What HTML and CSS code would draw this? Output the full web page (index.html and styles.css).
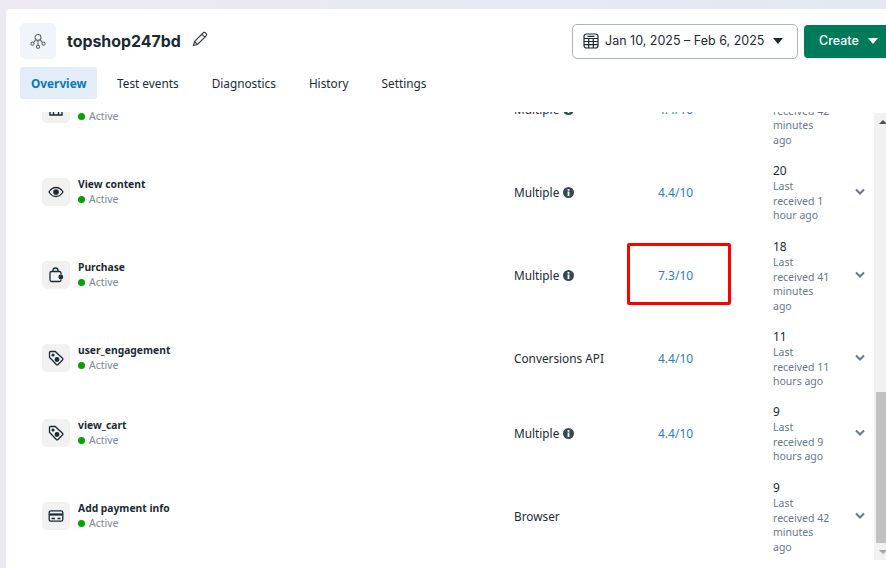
FILE: index.html
```html
<!DOCTYPE html>
<html lang="en">
<head>
<meta charset="utf-8">
<title>topshop247bd</title>
<link rel="stylesheet" href="styles.css">
</head>
<body>
<div class="card">
  <header class="head">
    <div class="title-row">
      <div class="brand">
        <span class="logo"><svg width="16" height="16" viewBox="0 0 18 18" fill="none" stroke="#5a6672" stroke-width="1.200"><circle cx="9" cy="5" r="3.300"/><circle cx="2.800" cy="12" r="1.800"/><circle cx="9" cy="15.500" r="1.800"/><circle cx="15.200" cy="12" r="1.800"/><path d="M9 8.300v5.400M6.800 7.500 4 10.600M11.200 7.500 14 10.600"/></svg></span>
        <h1 class="name">topshop247bd</h1>
        <svg class="pencil" width="16" height="16" viewBox="0 0 16 16" fill="none" stroke="#3c4650" stroke-width="1.200"><path d="M1.500 14.500 2.500 10.500 11 2a1.800 1.800 0 0 1 2.800.2 1.800 1.800 0 0 1 .2 2.800L5.500 13.500zM9.800 3.200l3 3M2.500 10.500l3 3"/></svg>
      </div>
      <div class="actions">
        <button class="date"><svg width="16" height="16" viewBox="0 0 16 16" fill="none" stroke="#1c2b33" stroke-width="1.200"><rect x="1" y="1" width="14" height="14" rx="2.500"/><path d="M1 5.500h14M1 8.500h14M1 11.700h14M5.700 5.500V15M10.300 5.500V15M4.500 3.300h7"/></svg><span>Jan 10, 2025 – Feb 6, 2025</span><i class="caret"></i></button>
        <button class="create"><span>Create</span><i class="caret caret-white"></i></button>
      </div>
    </div>
    <nav class="tabs">
      <a class="tab active">Overview</a>
      <a class="tab">Test events</a>
      <a class="tab">Diagnostics</a>
      <a class="tab">History</a>
      <a class="tab">Settings</a>
    </nav>
  </header>
  <div class="body">
    <main class="list">
      <div class="rows">
        <div class="row tall">
          <div class="c-name"><span class="ico"><svg width="16" height="16" viewBox="0 0 16 16" fill="none" stroke="#1c2b33" stroke-width="1.400"><path d="M2 3v11h12V3M5.500 3v11M10.500 3v11"/></svg></span><div><div class="ev"></div><div class="st"><i class="dot"></i>Active</div></div></div>
          <div class="c-int">Multiple <svg class="info" width="11" height="11" viewBox="0 0 12 12"><circle cx="6" cy="6" r="6" fill="#344854"/><path d="M5 2.300h2v1.800H5zM5 5h2v4.800H5z" fill="#fff"/></svg></div>
          <div class="c-score">4.4/10</div>
          <div class="c-recv"><div class="num"></div><div class="sub">Last<br>received 42<br>minutes<br>ago</div></div>
          <div class="c-chev"></div>
        </div>
        <div class="row short">
          <div class="c-name"><span class="ico"><svg width="16" height="16" viewBox="0 0 16 16" fill="none" stroke="#1c2b33" stroke-width="1.300"><path d="M1 8c2-3.300 4.300-4.500 7-4.500S13 4.700 15 8c-2 3.300-4.300 4.500-7 4.500S3 11.300 1 8z"/><circle cx="8" cy="8" r="2.200" fill="#1c2b33"/></svg></span><div><div class="ev">View content</div><div class="st"><i class="dot"></i>Active</div></div></div>
          <div class="c-int">Multiple <svg class="info" width="11" height="11" viewBox="0 0 12 12"><circle cx="6" cy="6" r="6" fill="#344854"/><path d="M5 2.300h2v1.800H5zM5 5h2v4.800H5z" fill="#fff"/></svg></div>
          <div class="c-score">4.4/10</div>
          <div class="c-recv"><div class="num">20</div><div class="sub">Last<br>received 1<br>hour ago</div></div>
          <div class="c-chev"><svg width="12" height="8" viewBox="0 0 12 8" fill="none" stroke="#67788a" stroke-width="2"><path d="M2 1.500 6 5.500l4-4"/></svg></div>
        </div>
        <div class="row tall">
          <div class="c-name"><span class="ico"><svg width="16" height="16" viewBox="0 0 16 16" fill="none" stroke="#1c2b33" stroke-width="1.300"><path d="M5 4.500V3.500a2.500 2.500 0 0 1 5 0v1"/><path d="M13 7.500V6a1.500 1.500 0 0 0-1.500-1.500h-8A1.500 1.500 0 0 0 2 6v7a1.500 1.500 0 0 0 1.500 1.500h8A1.500 1.500 0 0 0 13 13v-.5"/><circle cx="12.800" cy="10" r="1.800" fill="#1c2b33"/></svg></span><div><div class="ev">Purchase</div><div class="st"><i class="dot"></i>Active</div></div></div>
          <div class="c-int">Multiple <svg class="info" width="11" height="11" viewBox="0 0 12 12"><circle cx="6" cy="6" r="6" fill="#344854"/><path d="M5 2.300h2v1.800H5zM5 5h2v4.800H5z" fill="#fff"/></svg></div>
          <div class="c-score">7.3/10</div>
          <div class="c-recv"><div class="num">18</div><div class="sub">Last<br>received 41<br>minutes<br>ago</div></div>
          <div class="c-chev"><svg width="12" height="8" viewBox="0 0 12 8" fill="none" stroke="#67788a" stroke-width="2"><path d="M2 1.500 6 5.500l4-4"/></svg></div>
        </div>
        <div class="row short">
          <div class="c-name"><span class="ico"><svg width="16" height="16" viewBox="0 0 16 16" fill="none" stroke="#1c2b33" stroke-width="1.300"><path d="M1.500 2.500a1 1 0 0 1 1-1h4.700l7.300 6.800a1.200 1.200 0 0 1 0 1.700l-4.500 4.500a1.200 1.200 0 0 1-1.700 0L1.500 7.300z"/><circle cx="5" cy="5" r=".9" fill="#1c2b33"/><circle cx="9" cy="9.500" r="1.800" fill="#1c2b33"/></svg></span><div><div class="ev">user_engagement</div><div class="st"><i class="dot"></i>Active</div></div></div>
          <div class="c-int">Conversions API</div>
          <div class="c-score">4.4/10</div>
          <div class="c-recv"><div class="num">11</div><div class="sub">Last<br>received 11<br>hours ago</div></div>
          <div class="c-chev"><svg width="12" height="8" viewBox="0 0 12 8" fill="none" stroke="#67788a" stroke-width="2"><path d="M2 1.500 6 5.500l4-4"/></svg></div>
        </div>
        <div class="row short">
          <div class="c-name"><span class="ico"><svg width="16" height="16" viewBox="0 0 16 16" fill="none" stroke="#1c2b33" stroke-width="1.300"><path d="M1.500 2.500a1 1 0 0 1 1-1h4.700l7.300 6.800a1.200 1.200 0 0 1 0 1.700l-4.500 4.500a1.200 1.200 0 0 1-1.700 0L1.500 7.300z"/><circle cx="5" cy="5" r=".9" fill="#1c2b33"/><circle cx="9" cy="9.500" r="1.800" fill="#1c2b33"/></svg></span><div><div class="ev">view_cart</div><div class="st"><i class="dot"></i>Active</div></div></div>
          <div class="c-int">Multiple <svg class="info" width="11" height="11" viewBox="0 0 12 12"><circle cx="6" cy="6" r="6" fill="#344854"/><path d="M5 2.300h2v1.800H5zM5 5h2v4.800H5z" fill="#fff"/></svg></div>
          <div class="c-score">4.4/10</div>
          <div class="c-recv"><div class="num">9</div><div class="sub">Last<br>received 9<br>hours ago</div></div>
          <div class="c-chev"><svg width="12" height="8" viewBox="0 0 12 8" fill="none" stroke="#67788a" stroke-width="2"><path d="M2 1.500 6 5.500l4-4"/></svg></div>
        </div>
        <div class="row tall">
          <div class="c-name"><span class="ico"><svg width="16" height="16" viewBox="0 0 16 16" fill="none" stroke="#1c2b33" stroke-width="1.300"><rect x="1.200" y="2.800" width="13.600" height="10.400" rx="1.800"/><path d="M1.200 6.500h13.600" stroke-width="2.200"/><path d="M3.500 10.500h3.500M9.500 10.500h3"/></svg></span><div><div class="ev">Add payment info</div><div class="st"><i class="dot"></i>Active</div></div></div>
          <div class="c-int">Browser</div>
          <div class="c-score"></div>
          <div class="c-recv"><div class="num">9</div><div class="sub">Last<br>received 42<br>minutes<br>ago</div></div>
          <div class="c-chev"><svg width="12" height="8" viewBox="0 0 12 8" fill="none" stroke="#67788a" stroke-width="2"><path d="M2 1.500 6 5.500l4-4"/></svg></div>
        </div>
      </div>
    </main>
    <div class="scrollbar"><div class="sb-btn"><i class="sb-up"></i></div><div class="sb-track"><div class="sb-thumb"></div></div><div class="sb-btn"><i class="sb-down"></i></div></div>
    <div class="highlight"></div>
  </div>
</div>
</body>
</html>
```
FILE: styles.css
```css
* { box-sizing: border-box; }
html, body { margin: 0; height: 100%; overflow: hidden; }
body {
  background: linear-gradient(90deg, #ece9f2 0%, #e4e8f5 100%);
  padding: 9px 0 0 6px;
  font-family: "Noto Sans", "Liberation Sans", sans-serif;
  color: #1c2b33;
}
.card {
  background: #fff;
  border-radius: 4px 0 0 0;
  height: 559px;
  width: 880px;
  display: flex;
  flex-direction: column;
  overflow: hidden;
}
.head { padding: 14px 0 0 14px; height: 103px; flex: none; }
.title-row { display: flex; justify-content: space-between; align-items: center; height: 36px; }
.brand { display: flex; align-items: center; }
.logo {
  width: 36px; height: 36px; border-radius: 5px; background: #f1f4f8;
  display: flex; align-items: center; justify-content: center;
}
.name { font-family: "Inter", sans-serif; font-size: 15.900px; font-weight: 700; margin: 0 0 0 11px; }
.pencil { margin-left: 11px; margin-top: -4px; }
.actions { display: flex; align-items: center; gap: 6px; }
.date {
  display: flex; align-items: center; width: 226px; height: 35px; padding: 0 0 1px 10px;
  background: #fff; border: 1px solid #a8b5c2; border-radius: 5px;
  font-family: "Inter", sans-serif; font-size: 12.500px; color: #1c2b33;
}
.date span { margin-left: 6px; }
.date .caret { margin-left: 9px; }
.create {
  display: flex; align-items: center; width: 82px; height: 33px; padding: 0 0 1px 15px;
  background: #007b5a; border: 0; border-radius: 4px 0 0 4px; color: #fff;
  font-family: "Inter", sans-serif; font-size: 12.500px; font-weight: 500;
}
.create .caret { margin-left: 9px; }
.caret { display: block; width: 0; height: 0; border: 5px solid transparent; border-top: 6px solid #1c2b33; border-bottom: 0; }
.caret-white { border-top-color: #fff; }
.tabs { display: flex; margin-top: 8px; gap: 11px; }
.tab {
  height: 32px; padding: 0 11px; display: flex; align-items: center; border-radius: 3px;
  font-size: 11.800px; color: #1c2b33;
}
.active { background: #e2edf7; color: #0a78be; font-weight: 700; margin-right: -2px; width: 77px; }
.body { position: relative; flex: 1; min-height: 0; overflow: hidden; }
.list { height: 100%; overflow: hidden; }
.rows { margin-top: -48.500px; padding-left: 36px; }
.row { display: flex; align-items: center; }
.tall { height: 91px; }
.short { height: 75px; }
.c-name { width: 472px; display: flex; align-items: center; gap: 8px; }
.ico {
  width: 28px; height: 28px; background: #f1f1f1; border-radius: 5px;
  display: flex; align-items: center; justify-content: center; flex: none;
}
.ev { font-size: 10.300px; font-weight: 700; line-height: 15px; min-height: 15px; }
.st { font-size: 10.500px; line-height: 15px; color: #7b8794; display: flex; align-items: center; }
.dot { width: 7px; height: 7px; border-radius: 50%; background: #00a400; margin-right: 4px; }
.c-int { width: 144px; font-size: 11.800px; display: flex; align-items: center; gap: 4px; }
.c-score { width: 115px; font-size: 12px; color: #2b7dc4; }
.c-recv { width: 81px; padding-top: 2px; }
.num { font-size: 12px; line-height: 16px; min-height: 16px; }
.sub { font-size: 10.500px; line-height: 14.500px; color: #67788a; }
.c-chev { width: 12px; display: flex; }
.highlight {
  position: absolute; left: 621px; top: 131px; width: 104px; height: 62px;
  border: 3px solid #f00; border-radius: 2px;
}
.scrollbar {
  position: absolute; right: -5px; top: 1px; bottom: 8px; width: 17px; background: #f1f1f1;
  display: flex; flex-direction: column;
}
.sb-btn { height: 17px; flex: none; display: flex; align-items: center; justify-content: center; }
.sb-track { flex: 1; display: flex; flex-direction: column; justify-content: flex-end; padding: 0 2px; }
.sb-thumb { height: 151px; background: #c1c1c1; }
.sb-up, .sb-down { display: block; width: 0; height: 0; border: 4px solid transparent; }
.sb-up { border-bottom: 4px solid #505050; border-top: 0; }
.sb-down { border-top: 4px solid #a3a3a3; border-bottom: 0; }
```
